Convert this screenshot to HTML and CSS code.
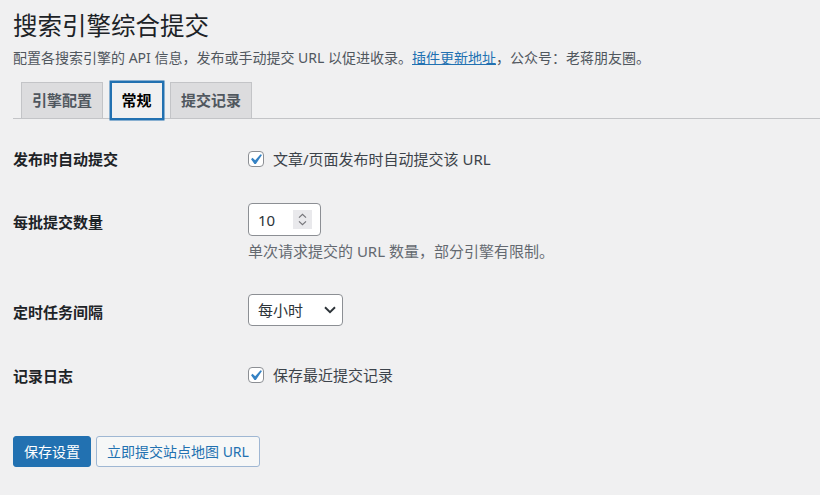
FILE: index.html
```html
<!DOCTYPE html>
<html lang="zh-CN">
<head>
<meta charset="utf-8">
<title>搜索引擎综合提交</title>
<link rel="stylesheet" href="styles.css">
</head>
<body>
<div class="wrap">
  <h1 class="title">搜索引擎综合提交</h1>
  <p class="intro">配置各搜索引擎的 API 信息，发布或手动提交 URL 以促进收录。<a href="#">插件更新地址</a>，公众号：老蒋朋友圈。</p>
  <nav class="tabs">
    <a class="tab" href="#">引擎配置</a>
    <a class="tab active" href="#">常规</a>
    <a class="tab" href="#">提交记录</a>
  </nav>

  <div class="form">
    <div class="row r1">
      <div class="th">发布时自动提交</div>
      <div class="td">
        <label class="check">
          <svg class="cb" width="16" height="16" viewBox="0 0 16 16"><rect x="0.5" y="0.5" width="15" height="15" rx="3.5" fill="#fff" stroke="#8c8f94"/><g transform="translate(-3 -2) scale(1.05)"><path d="M14.83 4.89l1.34.94-5.81 8.38H9.02L5.78 9.67l1.34-1.25 2.57 2.4z" fill="#3582c4"/></g></svg>
          <span>文章/页面发布时自动提交该 URL</span>
        </label>
      </div>
    </div>

    <div class="row r2">
      <div class="th">每批提交数量</div>
      <div class="td ctl">
        <div class="num">
          <span class="val">10</span>
          <svg class="spin" width="19" height="19" viewBox="0 0 19 19"><rect width="19" height="19" fill="#e9e9ec"/><path d="M6 7.6 L9.5 4.3 L13 7.6" fill="none" stroke="#75757a" stroke-width="1.2"/><path d="M6 11.4 L9.5 14.7 L13 11.4" fill="none" stroke="#75757a" stroke-width="1.2"/></svg>
        </div>
        <p class="desc">单次请求提交的 URL 数量，部分引擎有限制。</p>
      </div>
    </div>

    <div class="row r3">
      <div class="th">定时任务间隔</div>
      <div class="td ctl">
        <div class="select">
          <span>每小时</span>
          <svg class="chev" width="12" height="8" viewBox="0 0 12 8"><path d="M1 1.3 L6 6.2 L11 1.3" fill="none" stroke="#2c3338" stroke-width="1.9"/></svg>
        </div>
      </div>
    </div>

    <div class="row r4">
      <div class="th">记录日志</div>
      <div class="td">
        <label class="check">
          <svg class="cb" width="16" height="16" viewBox="0 0 16 16"><rect x="0.5" y="0.5" width="15" height="15" rx="3.5" fill="#fff" stroke="#8c8f94"/><g transform="translate(-3 -2) scale(1.05)"><path d="M14.83 4.89l1.34.94-5.81 8.38H9.02L5.78 9.67l1.34-1.25 2.57 2.4z" fill="#3582c4"/></g></svg>
          <span>保存最近提交记录</span>
        </label>
      </div>
    </div>
  </div>

  <div class="actions">
    <button class="btn primary" type="button">保存设置</button>
    <button class="btn secondary" type="button">立即提交站点地图 URL</button>
  </div>
</div>
</body>
</html>
```

FILE: styles.css
```css
* { box-sizing: border-box; }

html, body {
  margin: 0;
  padding: 0;
  background: #f0f0f1;
}

body {
  font-family: "Noto Sans", "Noto Sans CJK SC", sans-serif;
  color: #3c434a;
  font-size: 15px;
}

.wrap {
  padding: 10px 0 0 13px;
}

.title {
  margin: 0;
  font-size: 24.5px;
  line-height: 32px;
  font-weight: 400;
  color: #1d2327;
}

.intro {
  margin: 6px 0 0 0;
  font-size: 14px;
  line-height: 20px;
  color: #50575e;
}

.intro a {
  color: #2271b1;
  text-decoration: underline;
}

.tabs {
  margin-top: 14px;
  display: flex;
  align-items: flex-end;
  padding-left: 8px;
  border-bottom: 1px solid #c3c4c7;
  height: 37px;
}

.tab {
  display: block;
  height: 37px;
  margin-bottom: -1px;
  margin-right: 7.5px;
  padding: 5px 10px;
  font-size: 15px;
  line-height: 25px;
  font-weight: 600;
  color: #50575e;
  background: #dcdcde;
  border: 1px solid #c3c4c7;
  text-decoration: none;
}

.tab.active {
  background: #f0f0f1;
  color: #000;
  border-color: #2271b1;
  box-shadow: 0 0 0 1.5px #2271b1;
}

.form {
  margin-top: 9px;
}

.row {
  display: grid;
  grid-template-columns: 235px 1fr;
}

.th {
  padding: 21px 0 21px 0;
  font-size: 15px;
  line-height: 20px;
  font-weight: 600;
  color: #1d2327;
}

.r2 .th { padding-top: 22px; }

.td {
  padding: 21px 0 21px 0;
  line-height: 20px;
}

.td.ctl {
  padding-top: 13px;
  padding-bottom: 20px;
}

.r3 .td.ctl { padding-bottom: 19px; }
.r4 .td { padding-top: 20px; padding-bottom: 22px; }

.check {
  display: flex;
  align-items: center;
  gap: 9px;
  font-size: 15px;
  line-height: 20px;
  color: #3c434a;
}

.cb { display: block; flex: none; }

.num {
  width: 73px;
  height: 33px;
  display: flex;
  align-items: center;
  justify-content: space-between;
  padding: 0 8px 0 9px;
  background: #fff;
  border: 1px solid #8c8f94;
  border-radius: 4px;
  font-size: 15px;
  color: #2c3338;
}

.spin { display: block; }

.desc {
  margin: 5px 0 0 0;
  font-size: 15px;
  line-height: 20px;
  color: #646970;
}

.select {
  width: 95px;
  height: 32px;
  display: flex;
  align-items: center;
  justify-content: space-between;
  padding: 0 6px 0 9px;
  background: #fff;
  border: 1px solid #8c8f94;
  border-radius: 4px;
  font-size: 15px;
  color: #2c3338;
}

.chev { display: block; }

.actions {
  margin-top: 29px;
  display: flex;
  gap: 5px;
}

.btn {
  height: 31px;
  padding: 0 10px;
  font-family: "Noto Sans", "Noto Sans CJK SC", sans-serif;
  font-size: 14px;
  line-height: 29px;
  border-radius: 3px;
  border: 1px solid #2271b1;
  cursor: pointer;
}

.btn.primary {
  background: #2271b1;
  color: #fff;
}

.btn.secondary {
  background: #f6f7f7;
  color: #2271b1;
  border-color: #9fb7d3;
}
```
